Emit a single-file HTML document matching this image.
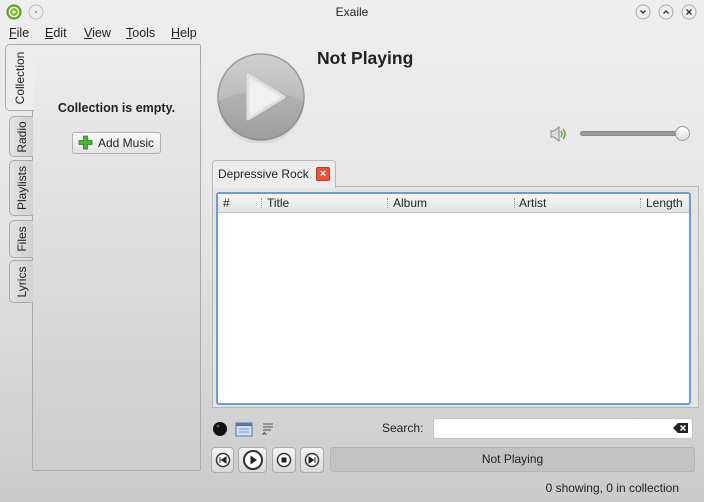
<!DOCTYPE html><html><head><style>
*{margin:0;padding:0;box-sizing:border-box}
body{width:704px;height:502px;overflow:hidden;font-family:"Liberation Sans","DejaVu Sans",sans-serif;font-size:12px;color:#222;background:linear-gradient(#eeeeee,#e6e6e6 40%,#cbcbcb);position:relative}
.a{position:absolute}
.tab{position:absolute;left:9px;width:24px;border:1px solid #aaa;border-right:none;border-radius:5px 0 0 5px;background:linear-gradient(90deg,#e2e2e2,#d2d2d2)}
.tab span{position:absolute;left:50%;top:50%;transform:translate(-50%,-50%) rotate(-90deg);white-space:nowrap;font-size:12px}
.btn{position:absolute;top:447px;height:26px;border:1px solid #aaa;border-radius:4px;background:linear-gradient(#f4f4f4,#d8d8d8)}
.btn svg{position:absolute;left:50%;top:50%;transform:translate(-50%,-50%)}
.col{position:absolute;top:196px;font-size:12px}
.sep{position:absolute;top:198px;width:1px;height:10px;border-left:1px dotted #999}
</style></head><body>
<!-- title bar -->
<svg class="a" style="left:6px;top:4px" width="38" height="16"><circle cx="8" cy="8" r="7" fill="#7bb830" stroke="#4f8a1a"/><circle cx="8" cy="8" r="4.5" fill="none" stroke="#fff" stroke-width="1.3"/><path d="M6.7 5.8L10.3 8 6.7 10.2Z" fill="#fff"/><circle cx="30" cy="8" r="7" fill="#eee" stroke="#bbb"/><circle cx="30" cy="8" r="1" fill="#888"/></svg>
<div class="a" style="left:0;width:704px;top:5px;text-align:center;font-size:12px">Exaile</div>
<svg class="a" style="left:635px;top:4px" width="66" height="16"><g fill="#eee" stroke="#aaa"><circle cx="8" cy="8" r="7"/><circle cx="31" cy="8" r="7"/><circle cx="54" cy="8" r="7"/></g><g fill="none" stroke="#333" stroke-width="1.3"><path d="M5.5 6.5L8 9 10.5 6.5"/><path d="M28.5 9.5L31 7 33.5 9.5"/><path d="M51.5 5.5L56.5 10.5M56.5 5.5L51.5 10.5"/></g></svg>
<!-- menu -->
<div class="a" style="top:26px;left:9px;font-size:12.5px;word-spacing:0"><u>F</u>ile</div>
<div class="a" style="top:26px;left:45px;font-size:12.5px"><u>E</u>dit</div>
<div class="a" style="top:26px;left:84px;font-size:12.5px"><u>V</u>iew</div>
<div class="a" style="top:26px;left:126px;font-size:12.5px"><u>T</u>ools</div>
<div class="a" style="top:26px;left:171px;font-size:12.5px"><u>H</u>elp</div>
<!-- left panel -->
<div class="a" style="left:32px;top:44px;width:169px;height:427px;border:1px solid #aaa;border-radius:2px;background:linear-gradient(#ececec,#cdcdcd)"></div>
<div class="tab" style="top:116px;height:41px"><span>Radio</span></div>
<div class="tab" style="top:160px;height:56px"><span>Playlists</span></div>
<div class="tab" style="top:220px;height:38px"><span>Files</span></div>
<div class="tab" style="top:260px;height:43px"><span>Lyrics</span></div>
<div class="tab" style="top:44px;left:5px;width:29px;height:67px;background:#ececec;border-color:#aaa"><span>Collection</span></div>
<div class="a" style="left:33px;top:101px;width:167px;text-align:center;font-weight:bold;font-size:12.5px">Collection is empty.</div>
<div class="a" style="left:72px;top:132px;width:89px;height:22px;border:1px solid #b0b0b0;border-radius:3px;background:linear-gradient(#fafafa,#e2e2e2)"></div>
<svg class="a" style="left:78px;top:135px" width="15" height="15"><path d="M5.5 1h4v4.5h4.5v4h-4.5v4.5h-4v-4.5h-4.5v-4h4.5z" fill="#49b43a" stroke="#2c7a22" stroke-width=".8"/></svg>
<div class="a" style="left:98px;top:136px;font-size:12px">Add Music</div>
<!-- play circle -->
<svg class="a" style="left:215px;top:51px" width="92" height="92"><defs><linearGradient id="g" x1="0" y1="0" x2="0" y2="1"><stop offset="0" stop-color="#d0d0d0"/><stop offset="1" stop-color="#a8a8a8"/></linearGradient></defs><circle cx="46" cy="46" r="43" fill="url(#g)" stroke="#999" stroke-width="1.5"/><path d="M3 50 Q46 30 89 50 A43 43 0 0 1 3 50Z" fill="#000" opacity=".06"/><path d="M33 24 L69 46 L33 68 Z" fill="#f1f1f1" stroke="#e0e0e0" stroke-width="3" stroke-linejoin="round"/></svg>
<div class="a" style="left:317px;top:48px;font-size:17.5px;font-weight:bold">Not Playing</div>
<!-- volume -->
<svg class="a" style="left:549px;top:126px" width="20" height="16"><path d="M2 5h3l5-4v14l-5-4H2z" fill="#ddd" stroke="#888"/><path d="M12 5q2 3 0 6M14 3q4 5 0 10" fill="none" stroke="#5aaa2a" stroke-width="1.4"/></svg>
<div class="a" style="left:580px;top:131px;width:106px;height:5px;border-radius:3px;background:#999;border:1px solid #888"></div>
<div class="a" style="left:675px;top:126px;width:15px;height:15px;border-radius:50%;background:linear-gradient(#fff,#ddd);border:1px solid #999"></div>
<!-- notebook -->
<div class="a" style="left:212px;top:186px;width:487px;height:222px;border:1px solid #b8b8b8;background:#e4e4e4"></div>
<div class="a" style="left:212px;top:160px;width:124px;height:28px;border:1px solid #b8b8b8;border-bottom:none;border-radius:4px 4px 0 0;background:#ececec"></div>
<div class="a" style="left:218px;top:167px;font-size:12px">Depressive Rock</div>
<div class="a" style="left:316px;top:167px;width:14px;height:14px;background:#e8563a;border:1px solid #b33;border-radius:2px;color:#fff;font-size:11px;line-height:12px;text-align:center;font-weight:bold">×</div>
<div class="a" style="left:216px;top:192px;width:475px;height:213px;border:2px solid #6f9bd4;border-radius:3px;background:#fff"></div>
<div class="a" style="left:218px;top:194px;width:471px;height:19px;background:linear-gradient(#f6f6f6,#e4e4e4);border-bottom:1px solid #c8c8c8"></div>
<div class="col" style="left:223px">#</div>
<div class="sep" style="left:261px"></div><div class="col" style="left:267px">Title</div>
<div class="sep" style="left:387px"></div><div class="col" style="left:393px">Album</div>
<div class="sep" style="left:514px"></div><div class="col" style="left:519px">Artist</div>
<div class="sep" style="left:640px"></div><div class="col" style="left:646px">Length</div>
<!-- bottom icons -->
<svg class="a" style="left:211px;top:420px" width="66" height="18"><circle cx="9" cy="9" r="7" fill="#111"/><circle cx="7" cy="6" r="1.5" fill="#555"/><rect x="25" y="3" width="16" height="13" fill="#cfe0f4" stroke="#5577aa"/><rect x="25" y="3" width="16" height="3" fill="#5577aa"/><path d="M28 9h10M28 12h10" stroke="#7799cc"/><path d="M52 4h10M52 7h10M52 10h8M56 14h-4l2-2" fill="none" stroke="#555"/></svg>
<div class="a" style="left:382px;top:421px;font-size:12px">Search:</div>
<div class="a" style="left:433px;top:418px;width:260px;height:21px;background:#fff;border:1px solid #c4c4c4;border-radius:3px"></div>
<svg class="a" style="left:673px;top:422px" width="16" height="12"><path d="M5 1h10v10H5L0 6z" fill="#222"/><path d="M7.5 3.5l5 5M12.5 3.5l-5 5" stroke="#fff" stroke-width="1.5"/></svg>
<div class="btn" style="left:211px;width:23px"><svg width="16" height="16"><circle cx="8" cy="8" r="6.5" fill="#fff" stroke="#333" stroke-width="1.5"/><path d="M5 5v6M11 5L6.5 8 11 11z" fill="#222" stroke="#222"/></svg></div>
<div class="btn" style="left:238px;width:29px"><svg width="22" height="22"><circle cx="11" cy="11" r="9" fill="#fff" stroke="#333" stroke-width="2"/><path d="M8.5 6.5L15 11 8.5 15.5z" fill="#222"/></svg></div>
<div class="btn" style="left:272px;width:24px"><svg width="16" height="16"><circle cx="8" cy="8" r="6.5" fill="#fff" stroke="#333" stroke-width="1.5"/><rect x="5.5" y="5.5" width="5" height="5" fill="#222"/></svg></div>
<div class="btn" style="left:300px;width:24px"><svg width="16" height="16"><circle cx="8" cy="8" r="6.5" fill="#fff" stroke="#333" stroke-width="1.5"/><path d="M11 5v6M5 5L9.5 8 5 11z" fill="#222" stroke="#222"/></svg></div>
<div class="a" style="left:330px;top:447px;width:365px;height:25px;border:1px solid #b4b4b4;border-radius:3px;background:#c2c2c2;text-align:center;line-height:23px;font-size:12px">Not Playing</div>
<div class="a" style="right:25px;top:481px;font-size:12px">0 showing, 0 in collection</div>
</body></html>
